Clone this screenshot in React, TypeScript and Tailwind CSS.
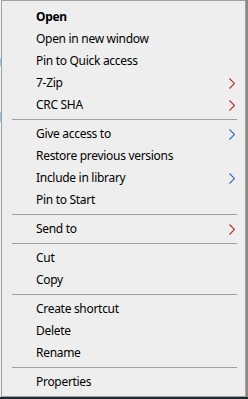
import React from "react";

type Item = { label: string; bold?: boolean; arrow?: "red" | "blue" } | "sep";

const items: Item[] = [
  { label: "Open", bold: true },
  { label: "Open in new window" },
  { label: "Pin to Quick access" },
  { label: "7-Zip", arrow: "red" },
  { label: "CRC SHA", arrow: "red" },
  "sep",
  { label: "Give access to", arrow: "blue" },
  { label: "Restore previous versions" },
  { label: "Include in library", arrow: "blue" },
  { label: "Pin to Start" },
  "sep",
  { label: "Send to", arrow: "red" },
  "sep",
  { label: "Cut" },
  { label: "Copy" },
  "sep",
  { label: "Create shortcut" },
  { label: "Delete" },
  { label: "Rename" },
  "sep",
  { label: "Properties" },
];

function Chevron({ color }: { color: "red" | "blue" }) {
  return (
    <svg width="6" height="11" viewBox="0 0 6 11" className="block">
      <polyline
        points="0.5,0.5 5.5,5.5 0.5,10.5"
        fill="none"
        stroke={color === "red" ? "#b0302a" : "#2f6cc0"}
        strokeWidth="1.1"
      />
    </svg>
  );
}

export default function App() {
  return (
    <div className="w-[248px] h-[399px] flex flex-col bg-[#1d2a30]">
      <div className="flex h-[397px]">
        <div className="w-px h-full bg-[#eef3f6] flex flex-col">
          <div className="h-[58px]" />
          <div className="h-[8px] bg-[#8cc8f0]" />
          <div className="h-[46px]" />
          <div className="h-[10px] bg-[#8cc8f0]" />
        </div>
        <div
          className="w-[245px] h-full bg-[#eeeeee] border border-[#a0a0a0] pt-[5px] text-[12px] text-black tracking-[-0.3px]"
          style={{ fontFamily: '"Noto Sans", "Open Sans", sans-serif' }}
        >
          {items.map((it, i) =>
            it === "sep" ? (
              <div key={i} className="h-[7px] flex items-center pl-[10px] pr-[8px]">
                <div className="h-px w-full bg-[#a0a0a0]" />
              </div>
            ) : (
              <div key={i} className="h-[22px] flex items-center pl-[34px] pr-[10px]">
                <span className={"flex-1 leading-none " + (it.bold ? "font-bold" : "")}>{it.label}</span>
                {it.arrow && <Chevron color={it.arrow} />}
              </div>
            )
          )}
        </div>
        <div className="w-[2px] h-full bg-[#8c8a7c]" />
      </div>
      <div className="h-[2px] bg-[#1d2a30]" />
    </div>
  );
}
